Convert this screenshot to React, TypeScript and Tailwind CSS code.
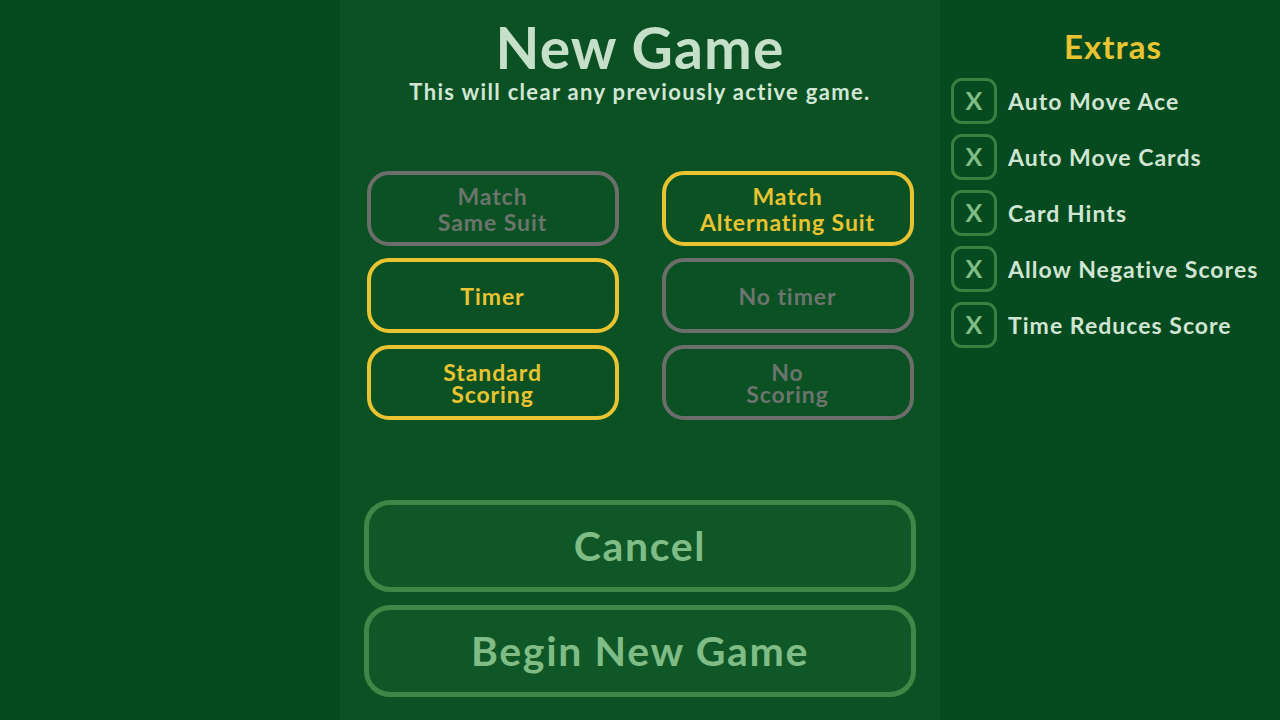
import React from "react";

const font = { fontFamily: "Lato, 'Open Sans', sans-serif" };

function Opt({ lines, on, tight }: { lines: string[]; on: boolean; tight?: boolean }) {
  return (
    <div
      className={`h-[75px] w-[252px] rounded-[22px] border-[4px] flex flex-col items-center justify-center font-bold text-[23px] tracking-[0.04em] ${
        tight ? "leading-[22px]" : "leading-[26px]"
      } ${on ? "border-[#e9c432] text-[#e9c432]" : "border-[#6c6e6c] text-[#6b746d]"}`}
    >
      {lines.map((l) => (
        <span key={l}>{l}</span>
      ))}
    </div>
  );
}

function Big({ label }: { label: string }) {
  return (
    <div className="h-[92px] w-[552px] rounded-[26px] border-[5px] border-[#3e8746] bg-[#0f5726] flex items-center justify-center text-[41px] tracking-[0.04em] font-bold text-[#80bd86]">
      {label}
    </div>
  );
}

function Extra({ label }: { label: string }) {
  return (
    <div className="flex items-center gap-[11px] h-[46px]">
      <div className="w-[46px] h-[46px] rounded-[11px] border-[3px] border-[#3b8043] flex items-center justify-center text-[25px] font-bold text-[#80bd86]">
        X
      </div>
      <span className="text-[23px] tracking-[0.045em] font-bold text-[#d0e5d2]">{label}</span>
    </div>
  );
}

export default function App() {
  return (
    <div className="w-[1280px] h-[720px] flex bg-[#064a1f] overflow-hidden" style={font}>
      <div className="w-[340px]" />
      <div className="w-[600px] h-full bg-[#0b5123] flex flex-col items-center">
        <h1 className="mt-[17px] text-[57px] leading-[60px] tracking-[0.02em] font-bold text-[#c6dfc9]">New Game</h1>
        <p className="mt-[2px] text-[22px] leading-[26px] tracking-[0.06em] font-bold text-[#d3e6d5]">
          This will clear any previously active game.
        </p>
        <div className="mt-[66px] grid grid-cols-[252px_252px] gap-x-[43px] gap-y-[12px]">
          <Opt lines={["Match", "Same Suit"]} on={false} />
          <Opt lines={["Match", "Alternating Suit"]} on={true} />
          <Opt lines={["Timer"]} on={true} />
          <Opt lines={["No timer"]} on={false} />
          <Opt lines={["Standard", "Scoring"]} on={true} tight />
          <Opt lines={["No", "Scoring"]} on={false} tight />
        </div>
        <div className="mt-[80px] flex flex-col gap-[13px]">
          <Big label="Cancel" />
          <Big label="Begin New Game" />
        </div>
      </div>
      <div className="w-[340px] h-full flex flex-col">
        <h2 className="mt-[26px] text-center text-[33px] leading-[40px] tracking-[0.03em] font-bold text-[#e9c432] pl-[6px]">Extras</h2>
        <div className="mt-[12px] ml-[11px] flex flex-col gap-[10px]">
          <Extra label="Auto Move Ace" />
          <Extra label="Auto Move Cards" />
          <Extra label="Card Hints" />
          <Extra label="Allow Negative Scores" />
          <Extra label="Time Reduces Score" />
        </div>
      </div>
    </div>
  );
}
